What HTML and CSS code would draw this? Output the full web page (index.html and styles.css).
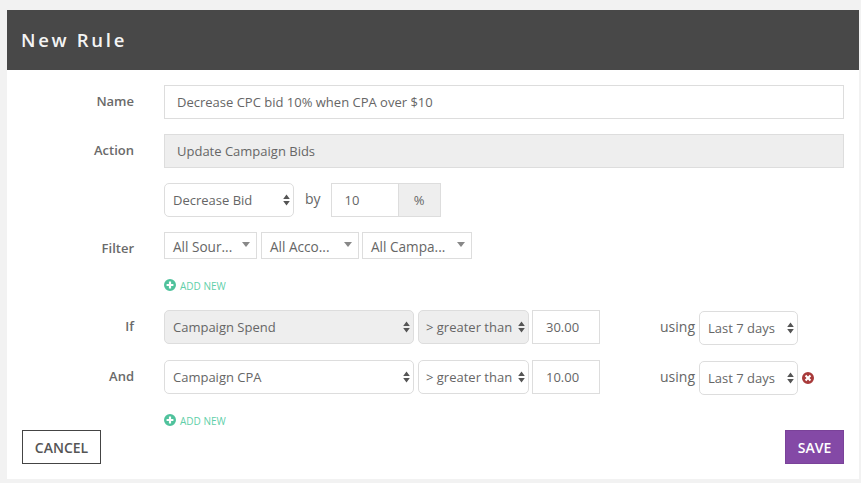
FILE: index.html
```html
<!DOCTYPE html>
<html lang="en">
<head>
<meta charset="utf-8">
<title>New Rule</title>
<link rel="stylesheet" href="styles.css">
</head>
<body>
<svg class="defs" width="0" height="0" aria-hidden="true">
  <symbol id="updown" viewBox="0 0 7 12"><path d="M3.5 0.5 L6.8 5 H0.2 Z M0.2 7 H6.8 L3.5 11.5 Z"/></symbol>
  <symbol id="plus" viewBox="0 0 12 12"><path fill-rule="evenodd" d="M6 0a6 6 0 1 1 0 12A6 6 0 0 1 6 0Zm-1.1 2.6v2.3H2.6v2.2h2.3v2.3h2.2V7.100h2.300V4.900H7.100V2.600Z"/></symbol>
  <symbol id="remove" viewBox="0 0 12 12"><path fill-rule="evenodd" d="M6 0a6 6 0 1 1 0 12A6 6 0 0 1 6 0ZM4.300 2.800 2.800 4.300 4.500 6 2.800 7.700l1.500 1.500L6 7.500l1.700 1.700 1.500-1.500L7.500 6l1.700-1.700-1.500-1.500L6 4.500Z"/></symbol>
</svg>
<main class="modal">
  <h1 class="title">New Rule</h1>
  <form class="form">
    <div class="row row-name">
      <label class="label">Name</label>
      <input class="input grow" value="Decrease CPC bid 10% when CPA over $10">
    </div>
    <div class="row row-action">
      <label class="label">Action</label>
      <input class="input grow disabled" value="Update Campaign Bids" readonly>
    </div>
    <div class="row row-bid">
      <span class="label"></span>
      <div class="select w-bid"><span>Decrease Bid</span><svg class="updown"><use href="#updown"/></svg></div>
      <span class="word word-by">by</span>
      <div class="group">
        <input class="input w-pct" value="10">
        <span class="addon">%</span>
      </div>
    </div>
    <div class="row row-filter">
      <label class="label">Filter</label>
      <div class="filters">
        <div class="drop w-src"><span>All Sour...</span><i class="caret"></i></div>
        <div class="drop w-acc"><span>All Acco...</span><i class="caret"></i></div>
        <div class="drop w-cam"><span>All Campa...</span><i class="caret"></i></div>
      </div>
    </div>
    <div class="row row-add">
      <span class="label"></span>
      <a class="add"><svg class="plus"><use href="#plus"/></svg><span class="add-text">ADD NEW</span></a>
    </div>
    <div class="row row-if">
      <label class="label">If</label>
      <div class="select w-metric locked"><span>Campaign Spend</span><svg class="updown"><use href="#updown"/></svg></div>
      <div class="select w-op locked"><span>&gt; greater than</span><svg class="updown"><use href="#updown"/></svg></div>
      <input class="input w-val" value="30.00">
      <span class="word word-using">using</span>
      <div class="select w-range shift"><span>Last 7 days</span><svg class="updown"><use href="#updown"/></svg></div>
    </div>
    <div class="row row-and">
      <label class="label">And</label>
      <div class="select w-metric"><span>Campaign CPA</span><svg class="updown"><use href="#updown"/></svg></div>
      <div class="select w-op"><span>&gt; greater than</span><svg class="updown"><use href="#updown"/></svg></div>
      <input class="input w-val" value="10.00">
      <span class="word word-using">using</span>
      <div class="select w-range shift"><span>Last 7 days</span><svg class="updown"><use href="#updown"/></svg></div>
      <svg class="remove"><use href="#remove"/></svg>
    </div>
    <div class="row row-add2">
      <span class="label"></span>
      <a class="add"><svg class="plus"><use href="#plus"/></svg><span class="add-text">ADD NEW</span></a>
    </div>
    <div class="footer">
      <button type="button" class="btn cancel">CANCEL</button>
      <button type="button" class="btn save">SAVE</button>
    </div>
  </form>
</main>
</body>
</html>
```

FILE: styles.css
```css
* { box-sizing: border-box; }
html, body { height: 100%; }
body {
  margin: 0;
  padding: 10px 2px 4px 7px;
  background: #f2f2f2;
  font-family: "Open Sans", "Liberation Sans", sans-serif;
  font-size: 13px;
  color: #666;
  overflow: hidden;
}
.defs { position: absolute; }
.modal { background: #fff; height: 469px; }
.title {
  margin: 0;
  height: 60px;
  padding-left: 14px;
  background: #484848;
  color: #f4f4f4;
  font-size: 18.500px;
  font-weight: 600;
  line-height: 60px;
  letter-spacing: 2.700px;
}
.form { padding: 15px 15px 0; }
.row { display: flex; align-items: flex-start; }
.label {
  flex: none;
  width: 112px;
  margin-right: 30px;
  text-align: right;
  font-weight: 600;
  color: #6a6a6a;
  line-height: 32px;
}
.input {
  height: 34px;
  border: 1px solid #ddd;
  background: #fff;
  padding: 0 12px;
  font: inherit;
  color: #666;
  outline: none;
  border-radius: 0;
}
.grow { flex: 1; min-width: 0; }
.disabled { background: #eee; }
.row-action, .row-bid, .row-filter { margin-top: 15px; }
.row-filter { height: 27px; }
.row-add { margin-top: 20px; height: 12px; }
.row-if { margin-top: 19px; }
.row-and { margin-top: 15px; }
.row-add2 { margin-top: 19px; height: 12px; }

.select {
  flex: none;
  display: flex;
  align-items: center;
  justify-content: space-between;
  height: 34px;
  padding: 0 3px 0 8px;
  border: 1px solid #ddd;
  border-radius: 5px;
  background: #fff;
  color: #666;
  white-space: nowrap;
}
.select.locked { background: #eee; }
.updown { width: 7px; height: 12px; fill: #555; flex: none; }
.w-bid { width: 130px; }
.w-metric { width: 250px; }
.w-op { width: 111px; margin-left: 4px; padding-left: 7px; }
.w-range { width: 99px; }
.w-val { width: 68px; margin-left: 3px; padding-left: 13px; }
.shift { margin-top: 1px; }
.word { font-size: 14px; color: #666; line-height: 32px; }
.word-by { margin-left: 11px; margin-right: 10px; }
.word-using { margin-left: 60px; margin-top: 1px; width: 39px; }
.group { display: flex; }
.w-pct { width: 68px; padding-left: 13px; }
.addon {
  width: 43px;
  height: 34px;
  margin-left: -1px;
  border: 1px solid #ddd;
  background: #eee;
  text-align: center;
  line-height: 32px;
  font-size: 13px;
}

.filters { display: flex; }
.drop {
  display: flex;
  align-items: center;
  justify-content: space-between;
  height: 27px;
  padding: 1px 6px 0 8px;
  border: 1px solid #ddd;
  background: #fff;
  font-size: 13.600px;
  white-space: nowrap;
}
.w-src { width: 93px; margin-right: 4px; }
.w-acc { width: 98px; margin-right: 3px; }
.w-cam { width: 110px; }
.caret {
  flex: none;
  width: 0;
  height: 0;
  margin-top: -4px;
  border-left: 4px solid transparent;
  border-right: 4px solid transparent;
  border-top: 5px solid #888;
}

.add {
  display: flex;
  align-items: center;
  height: 12px;
  color: #5fcfa9;
  font-size: 10px;
  line-height: 12px;
}
.add-text { margin-top: 2px; }
.plus { width: 12px; height: 12px; fill: #4fc29c; margin-right: 4px; }
.remove { width: 12px; height: 12px; fill: #a83a3a; margin: 12px 0 0 4px; flex: none; }

.footer {
  display: flex;
  justify-content: space-between;
  margin-top: 4px;
}
.btn {
  height: 34px;
  font: inherit;
  font-size: 14px;
  font-weight: 600;
  border-radius: 0;
  padding: 0;
}
.cancel { width: 79px; background: #fff; border: 1px solid #444; color: #555; }
.save { width: 59px; background: #8449a6; border: 1px solid #7a4299; color: #fff; }
```
